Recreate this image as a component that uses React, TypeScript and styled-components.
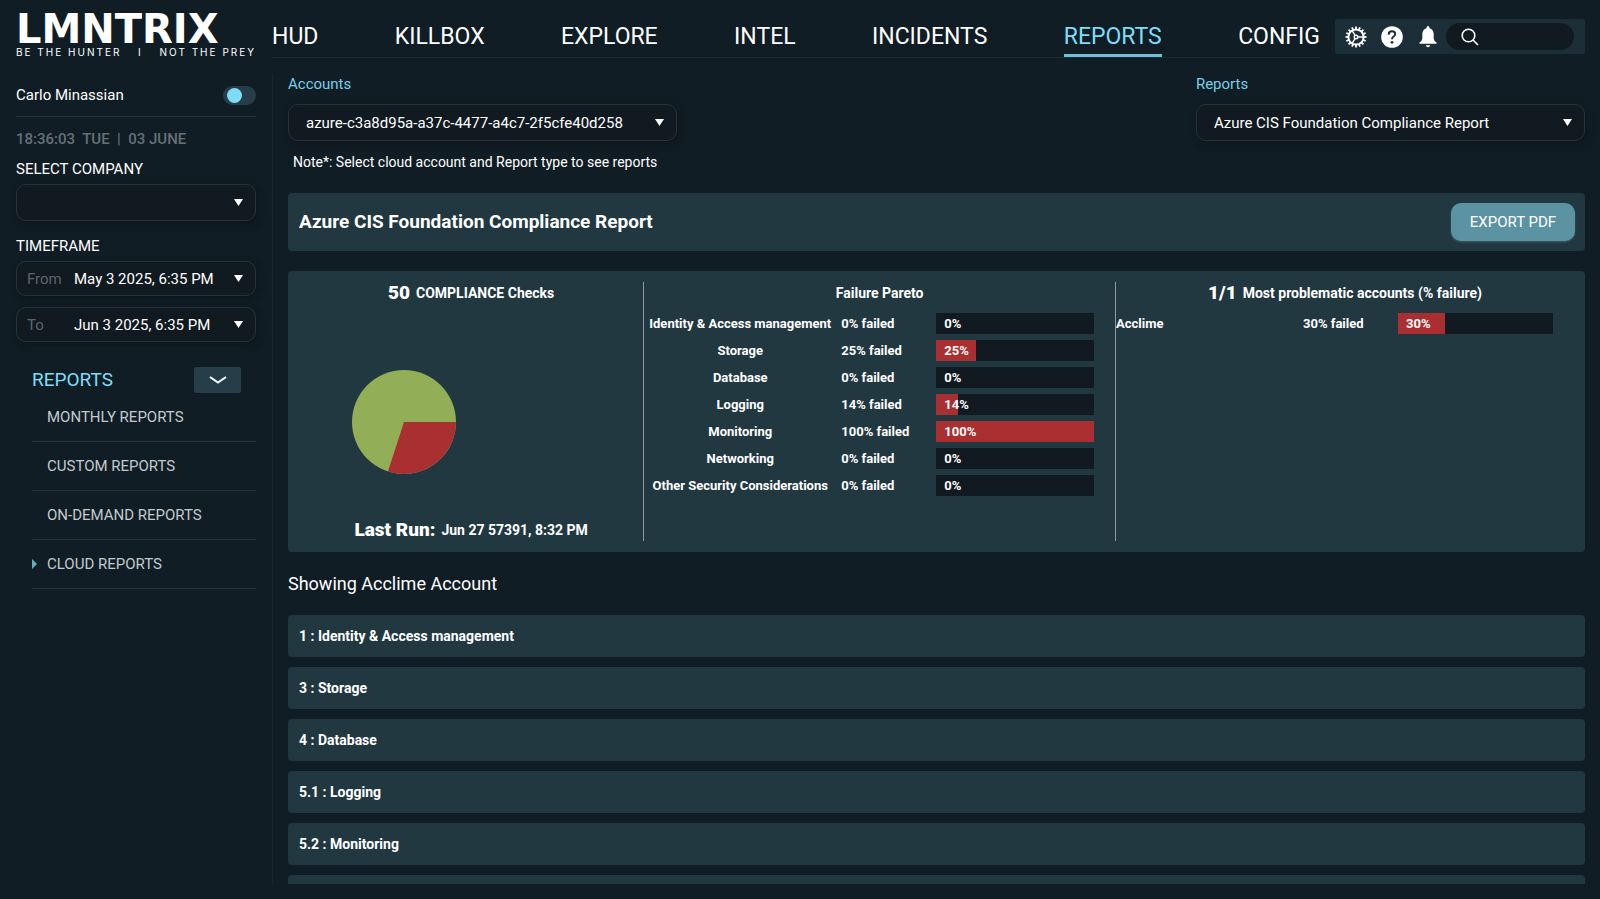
import React from "react";
import styled, { createGlobalStyle } from "styled-components";

const c = {
  bg: "#111d25",
  field: "#101a20",
  panel: "#223841",
  line: "#25343c",
  accent: "#7fdcf7",
  fail: "#a92f31",
  pass: "#92ae57",
};

const GlobalStyle = createGlobalStyle`
  * { box-sizing: border-box; }
  body { margin: 0; background: ${c.bg}; color: #fff; font-family: Roboto, "Liberation Sans", sans-serif; font-size: 15px; line-height: 20px; }
  button, input, select { font: inherit; color: inherit; }
  h1, h2, h3, p, ul { margin: 0; padding: 0; }
  ul { list-style: none; }
`;

const Page = styled.div`
  display: flex;
  flex-direction: column;
  height: 100vh;
  padding-bottom: 15px;
`;

const Header = styled.header`
  display: flex;
  align-items: flex-start;
  padding: 0 15px 0 16px;
  height: 74px;
  flex: none;
`;

const Brand = styled.a`
  display: flex;
  flex-direction: column;
  width: 256px;
  padding-top: 12px;
  flex: none;
  color: #fff;
  text-decoration: none;
`;

const Wordmark = styled.span`
  font: bold 40px/34px "DejaVu Sans", sans-serif;
`;

const Tagline = styled.span`
  display: flex;
  justify-content: space-between;
  width: 240px;
  font: 10px/12px Inter, sans-serif;
  letter-spacing: 2px;
`;

const Nav = styled.nav`
  display: flex;
  flex: 1;
  justify-content: space-between;
  margin-top: 17px;
  border-bottom: 1px solid #1b2a32;
`;

const NavLink = styled.a<{ $active?: boolean }>`
  height: 40px;
  font-size: 23px;
  line-height: 40px;
  text-decoration: none;
  color: ${(p) => (p.$active ? c.accent : "#fff")};
  box-shadow: ${(p) => (p.$active ? "inset 0 -3px #6fc3d8" : "none")};
`;

const Tools = styled.div`
  display: flex;
  align-items: center;
  width: 250px;
  height: 35px;
  margin: 19px 0 0 15px;
  padding: 0 11px 0 9px;
  background: #1c2f39;
  border-radius: 2px;
`;

const IconButton = styled.button`
  display: grid;
  place-items: center;
  width: 24px;
  height: 24px;
  margin-right: 12px;
  padding: 0;
  border: 0;
  background: none;
`;

const Search = styled.label`
  display: flex;
  align-items: center;
  flex: 1;
  height: 27px;
  margin-left: -6px;
  padding-left: 15px;
  border-radius: 14px;
  background: ${c.field};
  input { width: 70px; border: 0; background: none; outline: none; padding: 0 4px; }
`;

const Body = styled.div`
  display: flex;
  flex: 1;
  min-height: 0;
`;

const Sidebar = styled.aside`
  width: 273px;
  flex: none;
  padding: 0 16px;
  border-right: 1px solid #17262e;
`;

const UserRow = styled.label`
  display: flex;
  align-items: center;
  justify-content: space-between;
  height: 43px;
  border-bottom: 1px solid ${c.line};
`;

const Toggle = styled.input`
  appearance: none;
  display: flex;
  align-items: center;
  width: 33px;
  height: 19px;
  margin: 0;
  padding-left: 4px;
  border-radius: 10px;
  background: #273d49;
  &::before { content: ""; width: 15px; height: 15px; border-radius: 50%; background: ${c.accent}; }
`;

const Clock = styled.p`
  margin-top: 12px;
  font-weight: 500;
  color: #657077;
  white-space: pre;
`;

const Label = styled.label`
  display: block;
  margin: 10px 0 5px;
`;

const Caret = styled.svg`
  width: 9px;
  height: 7px;
  flex: none;
  fill: #fff;
  pointer-events: none;
`;

const Field = styled.div<{ $tall?: boolean }>`
  display: flex;
  align-items: center;
  height: ${(p) => (p.$tall ? 37 : 35)}px;
  padding: 0 12px 0 10px;
  margin-bottom: ${(p) => (p.$tall ? 15 : 11)}px;
  border: 1px solid ${c.line};
  border-radius: 10px;
  background: ${c.field};
  box-shadow: 2px 3px 6px #0d161c;
`;

const Select = styled.select`
  appearance: none;
  flex: 1;
  min-width: 0;
  border: 0;
  outline: 0;
  padding: 0;
  background: transparent;
`;

const DateLabel = styled.label`
  width: 47px;
  color: #5b666c;
`;

const DateInput = styled.input`
  flex: 1;
  min-width: 0;
  padding: 0;
  border: 0;
  outline: 0;
  background: transparent;
`;

const SideHead = styled.div`
  display: flex;
  align-items: center;
  justify-content: space-between;
  margin: 25px 15px 0 16px;
  height: 26px;
  h2 { font-size: 19px; line-height: 26px; font-weight: 400; color: ${c.accent}; }
`;

const Collapse = styled.button`
  display: grid;
  place-items: center;
  width: 47px;
  height: 26px;
  border: 0;
  border-radius: 2px;
  background: #263e48;
`;

const SideItem = styled.li`
  display: flex;
  align-items: center;
  height: 49px;
  margin-left: 16px;
  border-bottom: 1px solid ${c.line};
  a { color: #c3cace; text-decoration: none; }
`;

const Marker = styled.span<{ $on: boolean }>`
  width: 15px;
  &::before {
    content: "";
    display: block;
    width: 0;
    border: 5px solid transparent;
    border-right-width: 0;
    border-left-color: ${(p) => (p.$on ? "#63aebf" : "transparent")};
  }
`;

const Main = styled.main`
  flex: 1;
  min-width: 0;
  padding: 0 15px;
  overflow-y: auto;
  scrollbar-width: none;
`;

const Filters = styled.div`
  display: flex;
  justify-content: space-between;
`;

const Filter = styled.div`
  width: 30%;
  label { display: block; margin-bottom: 10px; color: #76cfe8; }
  ${Field} { margin: 0; padding: 0 12px 0 17px; }
`;

const Note = styled.p`
  margin: 11px 0 21px 5px;
  font-size: 14px;
`;

const Panel = styled.section`
  background: ${c.panel};
  border-radius: 4px;
`;

const TitleBar = styled(Panel)`
  display: flex;
  align-items: center;
  justify-content: space-between;
  height: 58px;
  padding: 0 10px 0 11px;
  h1 { font-size: 19px; line-height: 24px; font-weight: 700; }
`;

const ExportButton = styled.button`
  width: 124px;
  height: 38px;
  border: 0;
  border-radius: 10px;
  background: #5b93a3;
  box-shadow: 0 1px 2px #3c626e;
`;

const Stats = styled(Panel)`
  display: grid;
  grid-template-columns: 27fr 37fr 36fr;
  height: 281px;
  margin-top: 20px;
  padding: 11px;
`;

const Column = styled.div`
  display: flex;
  flex-direction: column;
  min-width: 0;
  & + & { border-left: 1px solid #8d999e; }
`;

const ColumnTitle = styled.h2`
  display: flex;
  align-items: center;
  justify-content: center;
  gap: 6px;
  height: 22px;
  font-size: 14px;
  line-height: 22px;
  font-weight: 700;
  strong { font-size: 19px; }
`;

const PieWrap = styled.div`
  display: flex;
  align-items: center;
  flex: 1;
  padding: 20px 0 0 53px;
`;

const Table = styled.table<{ $wide?: boolean }>`
  width: calc(100% - 21px);
  margin-top: 9px;
  table-layout: fixed;
  border-collapse: collapse;
  font-size: 13px;
  line-height: 21px;
  font-weight: 700;
  td, th { padding: 0 0 6px; text-align: left; white-space: nowrap; }
  th { width: ${(p) => (p.$wide ? 187 : 197)}px; text-align: ${(p) => (p.$wide ? "left" : "center")}; padding-right: ${(p) => (p.$wide ? 0 : 5)}px; }
  td:nth-child(2) { width: 95px; }
`;

const Bar = styled.div`
  display: grid;
  height: 21px;
  background: ${c.field};
  > * { grid-area: 1 / 1; }
  span { padding-left: 8px; }
`;

const Fill = styled.i`
  background: ${c.fail};
`;

const Showing = styled.h2`
  margin: 20px 0 19px;
  font-size: 18px;
  line-height: 24px;
  font-weight: 400;
`;

const Section = styled.button`
  display: block;
  width: 100%;
  height: 42px;
  margin-bottom: 10px;
  padding: 0 11px;
  border: 0;
  border-radius: 4px;
  background: ${c.panel};
  font-size: 14px;
  font-weight: 700;
  text-align: left;
`;

const Down = () => (
  <Caret viewBox="0 0 9 7" aria-hidden="true"><path d="M0 0H9L4.500 7Z" /></Caret>
);

const teeth = Array.from({ length: 16 }, (_, i) => i * 22.5);

const Gear = () => (
  <svg width="22" height="22" viewBox="0 0 22 22" fill="none" stroke="#fff" aria-hidden="true">
    <circle cx="11" cy="11" r="7.600" strokeWidth="2" />
    {teeth.map((a) => (
      <path key={a} d="M11 .5V3" strokeWidth="1.800" transform={`rotate(${a} 11 11)`} />
    ))}
    <path d="M11 11 7.300 4.800M11 11 7.300 17.200M11 11H18.500" strokeWidth="1.400" />
    <circle cx="11" cy="11" r="1.800" fill="#1c2f39" strokeWidth="1.400" />
  </svg>
);

const Help = () => (
  <svg width="22" height="22" viewBox="0 0 22 22" fill="none" aria-hidden="true">
    <circle cx="11" cy="11" r="10.800" fill="#fff" />
    <path d="M7.800 8.700V8Q7.800 5.300 11 5.300T14.200 8Q14.200 9.500 12.600 10.500 11 11.500 11 13.300" stroke="#1c2f39" strokeWidth="2" />
    <circle cx="11" cy="16.300" r="1.400" fill="#1c2f39" />
  </svg>
);

const Bell = () => (
  <svg width="18" height="22" viewBox="0 0 18 22" fill="#fff" aria-hidden="true">
    <path d="M9 0Q10.500 0 10.500 2.300 14.500 3.500 14.700 8V12.500Q14.700 14.500 17.500 16.500V17.800H.5V16.500Q3.300 14.500 3.300 12.500V8Q3.500 3.500 7.500 2.300 7.500 0 9 0ZM6.800 19.200H11.200Q10.800 21.300 9 21.300T6.800 19.200Z" />
  </svg>
);

const Glass = () => (
  <svg width="18" height="18" viewBox="0 0 18 18" fill="none" stroke="#fff" strokeWidth="1.600" aria-hidden="true">
    <circle cx="7.500" cy="7.500" r="6.300" />
    <path d="M12 12 17 17" />
  </svg>
);

const nav = ["HUD", "KILLBOX", "EXPLORE", "INTEL", "INCIDENTS", "REPORTS", "CONFIG"];
const reports = ["MONTHLY REPORTS", "CUSTOM REPORTS", "ON-DEMAND REPORTS", "CLOUD REPORTS"];
const pareto: [string, number][] = [
  ["Identity & Access management", 0],
  ["Storage", 25],
  ["Database", 0],
  ["Logging", 14],
  ["Monitoring", 100],
  ["Networking", 0],
  ["Other Security Considerations", 0],
];
const sections = [
  "1 : Identity & Access management",
  "3 : Storage",
  "4 : Database",
  "5.1 : Logging",
  "5.2 : Monitoring",
  "6 : Networking",
];

const FailureTable = ({ rows, wide }: { rows: [string, number][]; wide?: boolean }) => (
  <Table $wide={wide}>
    <tbody>
      {rows.map(([name, pct]) => (
        <tr key={name}>
          <th scope="row">{name}</th>
          <td>{pct}% failed</td>
          <td>
            <Bar>
              <Fill style={{ width: `${pct}%` }} />
              <span>{pct}%</span>
            </Bar>
          </td>
        </tr>
      ))}
    </tbody>
  </Table>
);

export default function App() {
  return (
    <>
      <GlobalStyle />
      <Page>
        <Header>
          <Brand href="#">
            <Wordmark>LMNTRIX</Wordmark>
            <Tagline><span>BE THE HUNTER</span><span>I</span><span>NOT THE PREY</span></Tagline>
          </Brand>
          <Nav>
            {nav.map((n) => (
              <NavLink key={n} href="#" $active={n === "REPORTS"}>{n}</NavLink>
            ))}
          </Nav>
          <Tools>
            <IconButton aria-label="Settings"><Gear /></IconButton>
            <IconButton aria-label="Help"><Help /></IconButton>
            <IconButton aria-label="Notifications"><Bell /></IconButton>
            <Search>
              <Glass />
              <input type="text" aria-label="Search" />
            </Search>
          </Tools>
        </Header>
        <Body>
          <Sidebar>
            <UserRow>
              Carlo Minassian
              <Toggle type="checkbox" />
            </UserRow>
            <Clock>18:36:03  TUE  |  03 JUNE</Clock>
            <Label htmlFor="company">SELECT COMPANY</Label>
            <Field $tall>
              <Select id="company"><option></option></Select>
              <Down />
            </Field>
            <Label htmlFor="from">TIMEFRAME</Label>
            <Field>
              <DateLabel htmlFor="from">From</DateLabel>
              <DateInput id="from" type="text" defaultValue="May 3 2025, 6:35 PM" />
              <Down />
            </Field>
            <Field>
              <DateLabel htmlFor="to">To</DateLabel>
              <DateInput id="to" type="text" defaultValue="Jun 3 2025, 6:35 PM" />
              <Down />
            </Field>
            <SideHead>
              <h2>REPORTS</h2>
              <Collapse aria-label="Collapse reports">
                <svg width="18" height="8" viewBox="0 0 18 8" fill="none" stroke="#fff" strokeWidth="2"><path d="M1 1 9 6.500 17 1" /></svg>
              </Collapse>
            </SideHead>
            <ul>
              {reports.map((r) => (
                <SideItem key={r}>
                  <Marker $on={r === "CLOUD REPORTS"} />
                  <a href="#">{r}</a>
                </SideItem>
              ))}
            </ul>
          </Sidebar>
          <Main>
            <Filters>
              <Filter>
                <label htmlFor="account">Accounts</label>
                <Field $tall>
                  <Select id="account"><option>azure-c3a8d95a-a37c-4477-a4c7-2f5cfe40d258</option></Select>
                  <Down />
                </Field>
              </Filter>
              <Filter>
                <label htmlFor="report">Reports</label>
                <Field $tall>
                  <Select id="report"><option>Azure CIS Foundation Compliance Report</option></Select>
                  <Down />
                </Field>
              </Filter>
            </Filters>
            <Note>Note*: Select cloud account and Report type to see reports</Note>
            <TitleBar>
              <h1>Azure CIS Foundation Compliance Report</h1>
              <ExportButton>EXPORT PDF</ExportButton>
            </TitleBar>
            <Stats>
              <Column>
                <ColumnTitle><strong>50</strong> COMPLIANCE Checks</ColumnTitle>
                <PieWrap>
                  <svg width="104" height="104" viewBox="-52 -52 104 104" role="img" aria-label="30% failed, 70% passed">
                    <circle r="52" fill={c.pass} />
                    <path d="M0 0H52A52 52 0 0 1 -16.070 49.450Z" fill={c.fail} />
                  </svg>
                </PieWrap>
                <ColumnTitle as="p"><strong>Last Run:</strong> Jun 27 57391, 8:32 PM</ColumnTitle>
              </Column>
              <Column>
                <ColumnTitle>Failure Pareto</ColumnTitle>
                <FailureTable rows={pareto} />
              </Column>
              <Column>
                <ColumnTitle><strong>1/1</strong> Most problematic accounts (% failure)</ColumnTitle>
                <FailureTable rows={[["Acclime", 30]]} wide />
              </Column>
            </Stats>
            <Showing>Showing Acclime Account</Showing>
            {sections.map((s) => (
              <Section key={s}>{s}</Section>
            ))}
          </Main>
        </Body>
      </Page>
    </>
  );
}
